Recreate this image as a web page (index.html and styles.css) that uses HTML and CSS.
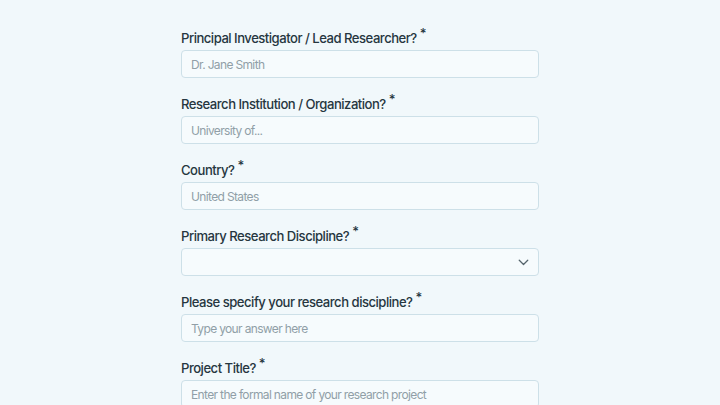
FILE: index.html
```html
<!DOCTYPE html>
<html>
<head>
<title>Research Application</title>
<link rel="stylesheet" href="styles.css">
</head>
<body>

<form class="form">
  <div class="field">
    <label class="label">Principal Investigator / Lead Researcher?<span class="req">*</span></label>
    <input class="input" type="text" placeholder="Dr. Jane Smith">
  </div>
  <div class="field">
    <label class="label">Research Institution / Organization?<span class="req">*</span></label>
    <input class="input" type="text" placeholder="University of...">
  </div>
  <div class="field">
    <label class="label">Country?<span class="req">*</span></label>
    <input class="input" type="text" placeholder="United States">
  </div>
  <div class="field">
    <label class="label">Primary Research Discipline?<span class="req">*</span></label>
    <div class="select">
      <svg class="chevron" width="11" height="7" viewBox="0 0 11 7" fill="none">
        <path d="M1.25 1.25L5.5 5.5L9.75 1.25" stroke="#55646c" stroke-width="1.3" stroke-linecap="round" stroke-linejoin="round"/>
      </svg>
    </div>
  </div>
  <div class="field">
    <label class="label">Please specify your research discipline?<span class="req">*</span></label>
    <input class="input" type="text" placeholder="Type your answer here">
  </div>
  <div class="field">
    <label class="label">Project Title?<span class="req">*</span></label>
    <input class="input" type="text" placeholder="Enter the formal name of your research project">
  </div>
</form>

</body>
</html>
```

FILE: styles.css
```css
body {
  margin: 0;
  background: #f1f8fb;
  font-family: Inter, "Noto Sans", sans-serif;
  color: #26363f;
}

.form {
  width: 358px;
  margin: 0 auto;
  padding-top: 28px;
  display: flex;
  flex-direction: column;
  gap: 16px;
}

.field {
  display: flex;
  flex-direction: column;
  gap: 4px;
}

.label {
  font-size: 13.1px;
  line-height: 20px;
  height: 18px;
  font-weight: 450;
  letter-spacing: -0.5px;
}

.req {
  font-size: 13px;
  position: relative;
  top: -5px;
  margin-left: 3px;
}

.input,
.select {
  box-sizing: border-box;
  height: 28px;
  width: 100%;
  margin: 0;
  padding: 0 9px;
  border: 1px solid #cde0e8;
  border-radius: 4px;
  background: #f6fbfd;
  font-family: inherit;
  font-size: 12px;
  letter-spacing: -0.65px;
  color: #26363f;
  outline: none;
}

.input::placeholder {
  color: #909fa7;
}

.select {
  display: flex;
  align-items: center;
  justify-content: flex-end;
  padding-right: 9px;
}
```
